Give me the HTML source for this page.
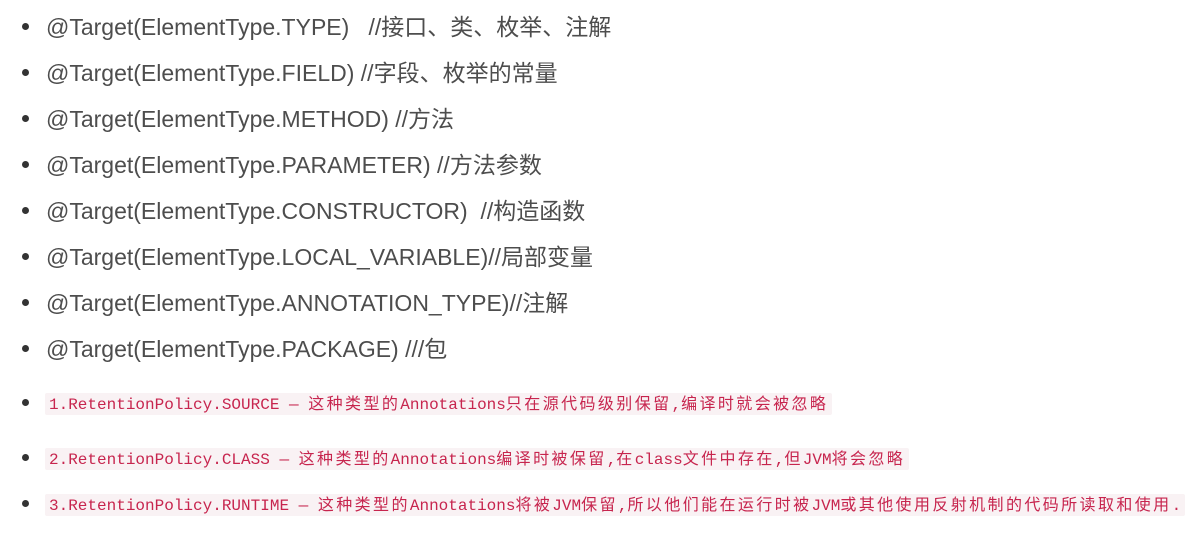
<!DOCTYPE html>
<html><head><meta charset="utf-8"><style>
body{margin:0;background:#fff;width:1194px;height:535px;overflow:hidden;font-family:"Liberation Sans","Noto Sans CJK SC",sans-serif;color:#4d4d4d}
.l{position:absolute;left:46px;font-size:23px;line-height:30px;white-space:nowrap}
.d{position:absolute;left:22px;width:7px;height:7px;border-radius:50%;background:#333}
.c{position:absolute;left:45px;height:22px;line-height:22px;padding:0 4px;background:#f9f2f4;color:#c7254e;font-family:"Liberation Mono","Noto Sans CJK SC",monospace;font-size:16px;white-space:nowrap;border-radius:2px}
.c span{display:inline-block;transform:translateY(-2px)}
.c b{font-weight:normal;font-family:"Noto Sans CJK SC",sans-serif;font-size:16px;letter-spacing:2.4px}
</style></head><body>
<div class="d" style="top:23px"></div><div class="l" style="top:12px">@Target(ElementType.TYPE) &nbsp; //接口、类、枚举、注解</div>
<div class="d" style="top:69px"></div><div class="l" style="top:58px">@Target(ElementType.FIELD) //字段、枚举的常量</div>
<div class="d" style="top:115px"></div><div class="l" style="top:104px">@Target(ElementType.METHOD) //方法</div>
<div class="d" style="top:161px"></div><div class="l" style="top:150px">@Target(ElementType.PARAMETER) //方法参数</div>
<div class="d" style="top:207px"></div><div class="l" style="top:196px">@Target(ElementType.CONSTRUCTOR) &nbsp;//构造函数</div>
<div class="d" style="top:253px"></div><div class="l" style="top:242px">@Target(ElementType.LOCAL_VARIABLE)//局部变量</div>
<div class="d" style="top:299px"></div><div class="l" style="top:288px">@Target(ElementType.ANNOTATION_TYPE)//注解</div>
<div class="d" style="top:345px"></div><div class="l" style="top:334px">@Target(ElementType.PACKAGE) ///包</div>
<div class="d" style="top:399px"></div><div class="c" style="top:393px"><span>1.RetentionPolicy.SOURCE — <b>这种类型的</b>Annotations<b>只在源代码级别保留</b>,<b>编译时就会被忽略</b></span></div>
<div class="d" style="top:454px"></div><div class="c" style="top:448px"><span>2.RetentionPolicy.CLASS — <b>这种类型的</b>Annotations<b>编译时被保留</b>,<b>在</b>class<b>文件中存在</b>,<b>但</b>JVM<b>将会忽略</b></span></div>
<div class="d" style="top:500px"></div><div class="c" style="top:494px"><span>3.RetentionPolicy.RUNTIME — <b>这种类型的</b>Annotations<b>将被</b>JVM<b>保留</b>,<b>所以他们能在运行时被</b>JVM<b>或其他使用反射机制的代码所读取和使用</b>.</span></div>
</body></html>
